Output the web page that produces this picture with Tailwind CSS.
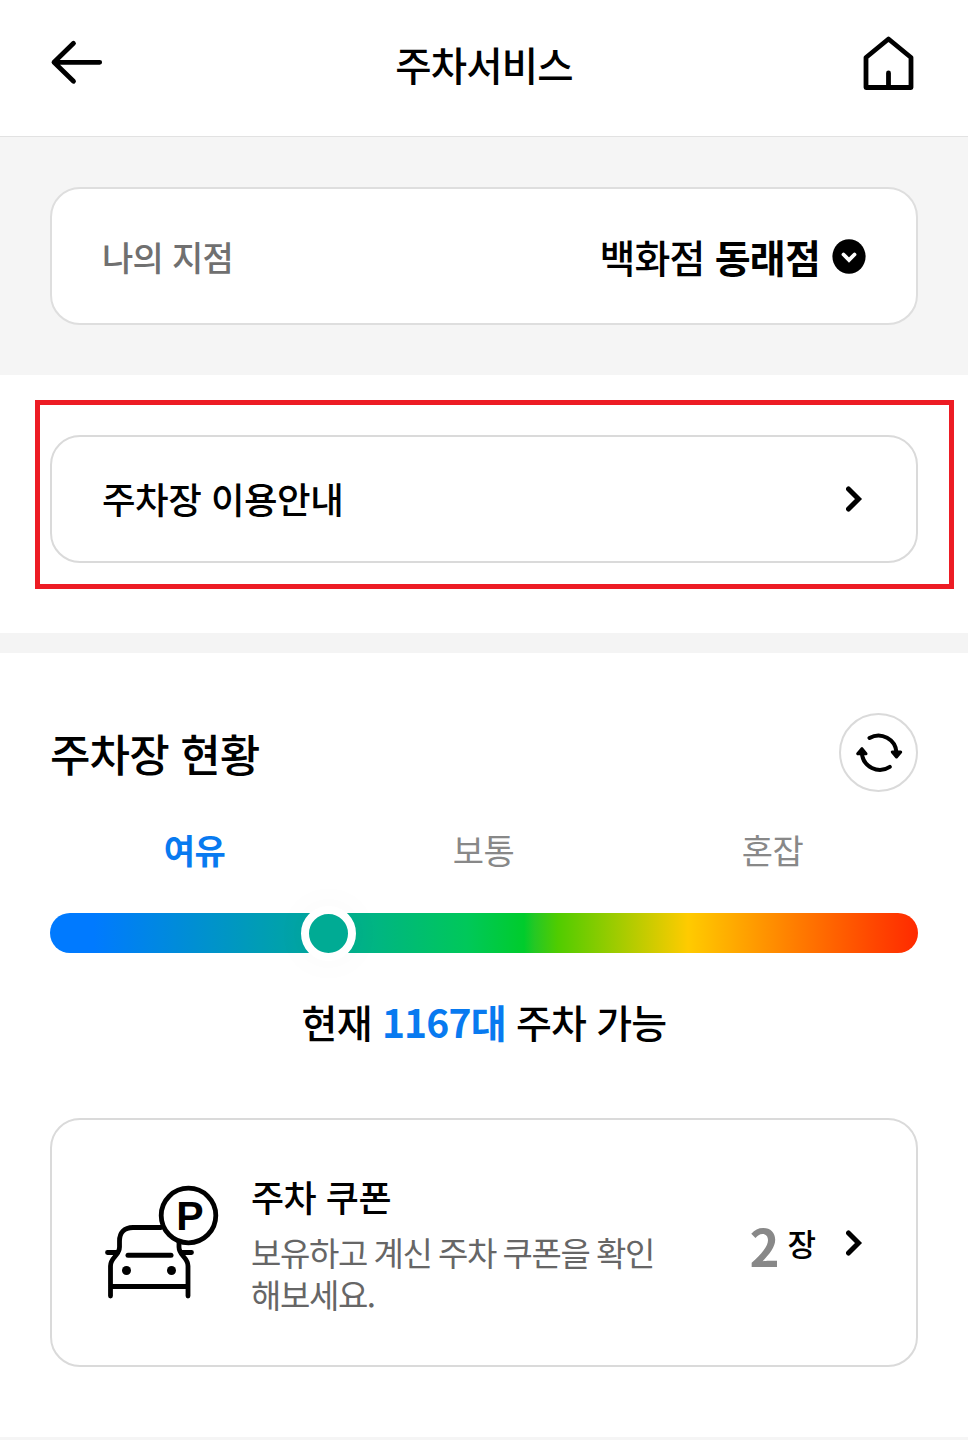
<!DOCTYPE html>
<html lang="ko">
<head>
  <meta charset="UTF-8">
  <title>주차서비스</title>
  <script src="https://cdn.jsdelivr.net/npm/@tailwindcss/browser@4"></script>
</head>
<body class="w-[968px] h-[1440px] overflow-hidden bg-white text-black font-['Noto_Sans_CJK_KR',sans-serif]">
  <header class="flex items-center justify-between h-[137px] px-[50px] border-b border-[#e2e2e2]">
    <svg class="w-[54px] h-[48px] mb-3" viewBox="0 0 54 48" fill="none" stroke="#000" stroke-width="4.8" stroke-linecap="round" stroke-linejoin="round">
      <path d="M4 24.3H49.7M23.5 5.3L4 24.3L23.5 43.3"/>
    </svg>
    <h1 class="text-[39.5px] font-medium tracking-[-0.8px] leading-[60px] mb-2 ml-1">주차서비스</h1>
    <svg class="w-[58px] h-[60px] mb-2.5" viewBox="0 0 58 60" fill="none" stroke="#000" stroke-width="4.8" stroke-linecap="round" stroke-linejoin="round">
      <path d="M6 24.5L28.5 6L51 24.5V54.5H6ZM28.5 40V54"/>
    </svg>
  </header>

  <section class="bg-[#f5f5f5] p-[50px]">
    <div class="flex items-center justify-between h-[138px] px-[50px] bg-white border-2 border-[#dedede] rounded-[30px]">
      <span class="text-[34px] font-medium text-[#707070] tracking-[-0.7px]">나의 지점</span>
      <div class="flex items-center">
        <span class="text-[39px] font-medium tracking-[-0.8px]">백화점 <b class="font-bold">동래점</b></span>
        <svg class="w-[34px] h-[36px] ml-3" viewBox="0 0 34 36">
          <ellipse cx="17" cy="18.5" rx="16.6" ry="17.3" fill="#000"/>
          <path d="M11.5 16.5L17 22L22.5 16.5" fill="none" stroke="#fff" stroke-width="3.8" stroke-linecap="round"/>
        </svg>
      </div>
    </div>
  </section>

  <section class="pt-[25px] pb-11 pl-[35px] pr-3.5">
    <div class="border-5 border-[#ed1c24] pt-[30px] pb-[21px] pl-2.5 pr-[31px]">
      <a class="flex items-center justify-between h-[128px] px-[50px] border-2 border-[#dadada] rounded-[30px]">
        <span class="text-[36.5px] font-medium tracking-[-0.5px]">주차장 이용안내</span>
        <svg class="w-[20px] h-[30px]" viewBox="0 0 20 30" fill="none" stroke="#000" stroke-width="5" stroke-linecap="round">
          <path d="M2.5 5L12.5 15L2.5 25"/>
        </svg>
      </a>
    </div>
  </section>

  <div class="h-5 bg-[#f4f4f4]"></div>

  <section class="px-[50px] pt-[60px]">
    <div class="flex items-center justify-between h-[79px]">
      <h2 class="text-[44px] font-medium tracking-[-0.9px] leading-[60px]">주차장 현황</h2>
      <button class="flex items-center justify-center size-[79px] rounded-full border-2 border-[#dadada]">
        <svg class="w-[50px] h-[46px]" viewBox="0 0 50 46" fill="none" stroke="#000" stroke-width="4" stroke-linecap="round" stroke-linejoin="round">
          <path d="M15.5 8A18 18 0 0 1 42.5 22.5M35.8 36.8A18 18 0 0 1 7.9 23"/>
          <path d="M38.3 22H46.7L42.5 27ZM3.7 23.8H12L7.9 18.7Z" fill="#000" stroke-width="3"/>
        </svg>
      </button>
    </div>
    <div class="grid grid-cols-3 h-[121px] pt-[33px] pr-px text-center text-[34px] leading-[50px] tracking-[-0.5px]">
      <span class="font-bold text-[#087af0]">여유</span>
      <span class="text-[#888]">보통</span>
      <span class="text-[#888]">혼잡</span>
    </div>
    <div class="relative h-10 rounded-full bg-[linear-gradient(90deg,#007aff_0%,#007aff_5%,#00c85a_48%,#00cc2c_54.6%,#24c824_55.8%,#50cc00_58.5%,#ffcb00_73.5%,#ff7c00_86%,#ff4600_95%,#ff2a00_100%)]">
      <div class="absolute left-[251px] top-[-7px] size-[55px] rounded-full border-8 border-white bg-[#00ab94] bg-clip-padding shadow-[0_0_40px_rgba(0,0,0,0.03)]"></div>
    </div>
    <p class="h-[165px] pt-[38px] text-center text-[39px] leading-[60px] font-medium tracking-[-0.8px]">현재 <b class="font-bold text-[#087af0]">1167대</b> 주차 가능</p>

    <a class="flex items-center h-[249px] pl-[52px] pr-[50px] border-2 border-[#dadada] rounded-[30px]">
      <svg class="w-[120px] h-[120px] mb-[3px] shrink-0" viewBox="0 0 120 120" fill="none" stroke="#000" stroke-width="4.8" stroke-linecap="round" stroke-linejoin="round">
        <path d="M57 46.5H29C20 46.5 15.5 52 15.5 60V66C15.5 75 6.5 76 6.5 85V115M6.5 105.5H84M84 115V85C84 76 75 75 75 66V58M3.5 71.5H14M77 71.5H87.5"/>
        <path d="M24 74.3H67" stroke-width="5"/>
        <circle cx="22.5" cy="89.5" r="4.5" fill="#000" stroke="none"/>
        <circle cx="67.5" cy="89.5" r="4.5" fill="#000" stroke="none"/>
        <circle cx="84.5" cy="34.5" r="27.3" fill="#fff"/>
        <text x="86" y="48.5" text-anchor="middle" fill="#000" stroke="none" class="font-bold text-[41px] font-['Liberation_Sans',sans-serif]">P</text>
      </svg>
      <div class="ml-[27px] w-[420px]">
        <h3 class="text-[36px] font-medium leading-[50px] tracking-[-0.5px]">주차 쿠폰</h3>
        <p class="mt-2.5 text-[33px] leading-[42px] text-[#666] tracking-[-1.4px] [word-spacing:-1.2px]">보유하고 계신 주차 쿠폰을 확인<br>해보세요.</p>
      </div>
      <div class="flex items-center ml-auto">
        <b class="text-[51px] font-bold text-[#888] leading-[60px] pt-1">2</b>
        <span class="ml-2 pt-0.5 text-[31px] font-medium">장</span>
        <svg class="w-[20px] h-[30px] ml-[30px]" viewBox="0 0 20 30" fill="none" stroke="#000" stroke-width="5" stroke-linecap="round">
          <path d="M2.5 5L12.5 15L2.5 25"/>
        </svg>
      </div>
    </a>
  </section>
  <div class="mt-[70px] h-[3px] bg-[#f5f5f5]"></div>
</body>
</html>
